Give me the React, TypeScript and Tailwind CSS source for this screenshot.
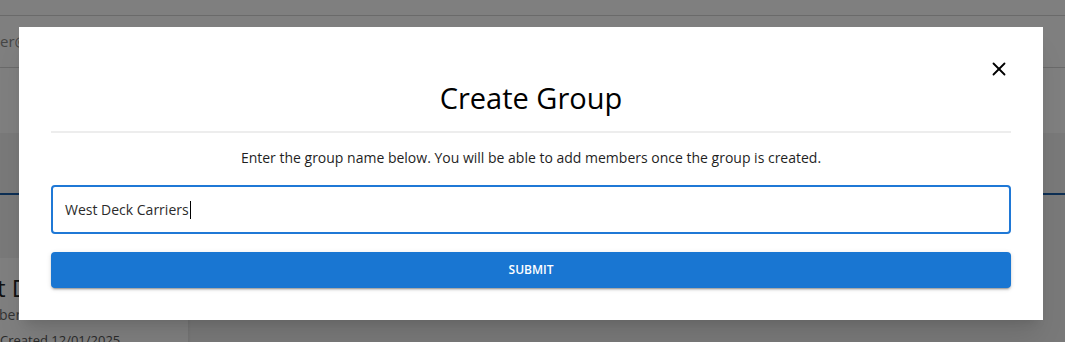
import { X } from "lucide-react";

const font = { fontFamily: "'Open Sans', 'Noto Sans', sans-serif" };

const Backdrop = () => {
  return (
    <div className="flex h-[342px] flex-col overflow-hidden bg-white">
      {/* top bar */}
      <div className="h-[16px] shrink-0 border-b border-[#d4d4d4]" />
      {/* search row */}
      <div className="flex h-[52px] shrink-0 items-center border-b border-[#d4d4d4]">
        <span className="text-[15px] text-[#8a8a8a]">er@westdeck.com</span>
      </div>
      <div className="h-[65px] shrink-0" />
      {/* page body */}
      <div className="flex shrink-0 flex-col bg-[#f3f3f3]">
        <div className="h-[62px] border-b-2 border-[#1a5fa8]" />
        <div className="flex pt-[63px]">
          <div className="w-[188px] bg-white pb-[10px] shadow-md">
            <div className="-ml-[3px] pt-[16px] text-[24px] leading-[28px] text-[#222]">
              t Deck Carriers
            </div>
            <div className="-ml-[1px] pt-[2px] text-[14px] leading-[22px] text-[#666]">
              bers: 4
            </div>
            <div className="pt-[5px] text-[13px] text-[#555]">Created 12/01/2025</div>
          </div>
          <div className="flex-1" />
        </div>
      </div>
    </div>
  );
};

const CreateGroupModal = () => {
  return (
    <div className="relative ml-[19px] mt-[27px] w-[1024px] bg-white px-[32px] pb-[32px] pt-[54px] shadow-xl">
      <button className="absolute right-[32px] top-[30px] flex h-[24px] w-[24px] items-center justify-center text-black">
        <X size={22} strokeWidth={2} />
      </button>

      <h2 className="text-center text-[29px] font-normal leading-[34px] text-black">
        Create Group
      </h2>
      <div className="mt-[16px] h-[2px] bg-[#ededed]" />

      <p className="mt-[15px] text-center text-[14px] leading-[20px] text-[#1f1f1f]">
        Enter the group name below. You will be able to add members once the group is created.
      </p>

      <div className="mt-[17px] flex h-[49px] items-center rounded-[4px] border-2 border-[#1f78d6] px-[12px]">
        <span className="text-[14px] text-[#2b2b2b]">West Deck Carriers</span>
        <span className="ml-[1px] inline-block h-[18px] w-px bg-black" />
      </div>

      <button className="mt-[18px] flex h-[36px] w-full items-center justify-center rounded-[4px] bg-[#1976d2] text-[12px] font-semibold text-white shadow-[0_3px_1px_-2px_rgba(0,0,0,0.2),0_2px_2px_0_rgba(0,0,0,0.14),0_1px_5px_0_rgba(0,0,0,0.12)]">
        SUBMIT
      </button>
    </div>
  );
};

export default function App() {
  return (
    <div className="relative h-[342px] w-[1065px] overflow-hidden" style={font}>
      <Backdrop />
      <div className="absolute inset-0 bg-black/50">
        <CreateGroupModal />
      </div>
    </div>
  );
}
